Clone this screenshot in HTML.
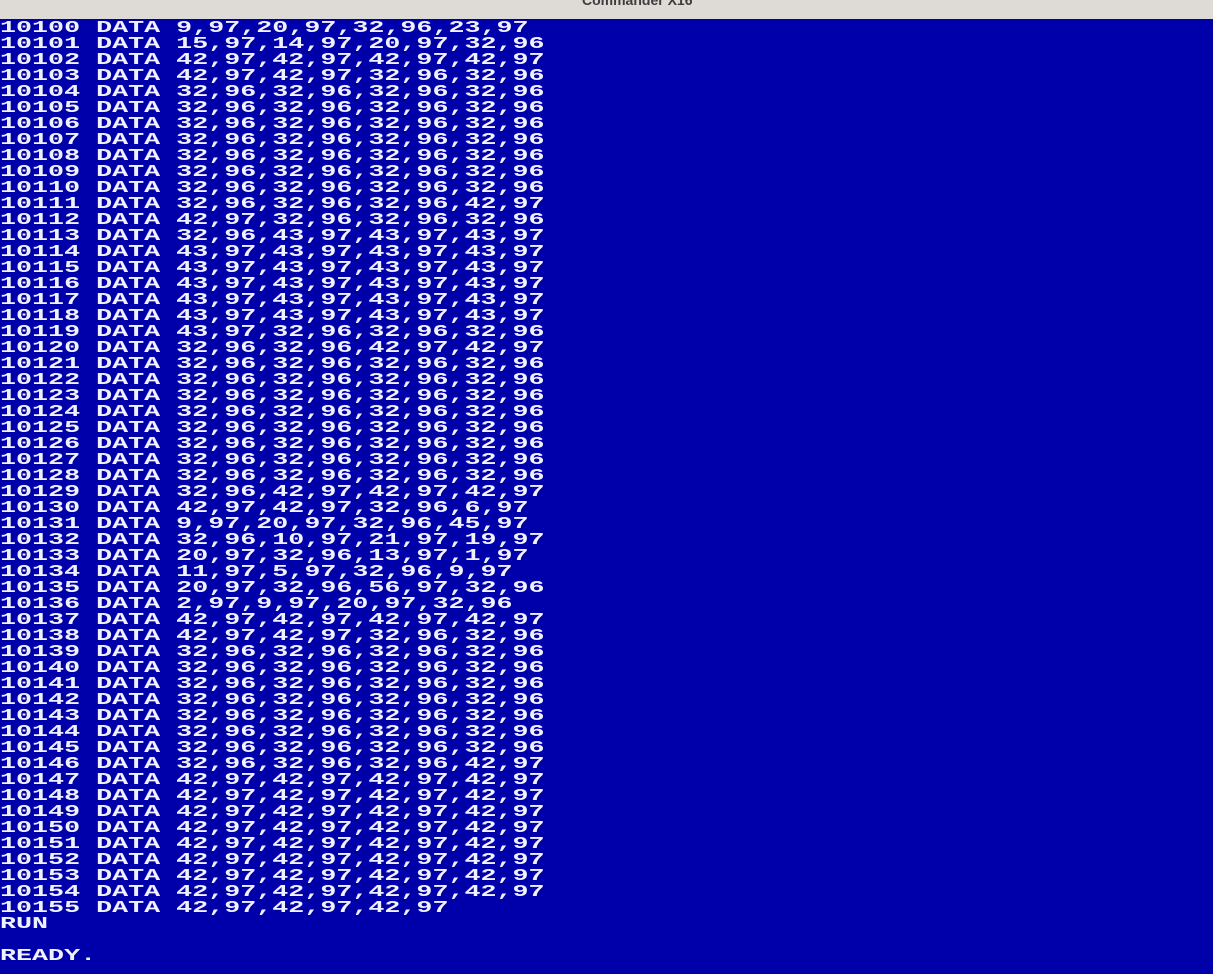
<!DOCTYPE html>
<html><head><meta charset="utf-8"><style>
html,body{margin:0;padding:0;width:1213px;height:974px;overflow:hidden;background:#0000aa}
#bar{position:absolute;left:0;top:0;width:1213px;height:19px;background:#dedbd6;overflow:hidden}
#bar span{position:absolute;left:582px;top:-8px;font:bold 14px "Liberation Sans",sans-serif;color:#3c3c3c;white-space:nowrap}
#scr{position:absolute;left:0;top:19px;width:1213px;height:955px;background:#0000aa}
.l{position:absolute;left:0;height:16px;line-height:16px;font:bold 17px "Liberation Mono",monospace;color:#f0f0ff;white-space:pre;transform-origin:0 0;transform:scaleX(1.57)}
</style></head><body>
<div id="bar"><span>Commander X16</span></div>
<div id="scr"></div>
<script>
var L=["9,97,20,97,32,96,23,97","15,97,14,97,20,97,32,96","42,97,42,97,42,97,42,97","42,97,42,97,32,96,32,96"];
var A="32,96,32,96,32,96,32,96",B="42,97,42,97,42,97,42,97",C="43,97,43,97,43,97,43,97";
for(var i=4;i<=10;i++)L.push(A);
L.push("32,96,32,96,32,96,42,97","42,97,32,96,32,96,32,96","32,96,43,97,43,97,43,97");
for(i=0;i<5;i++)L.push(C);
L.push("43,97,32,96,32,96,32,96","32,96,32,96,42,97,42,97");
for(i=0;i<8;i++)L.push(A);
L.push("32,96,42,97,42,97,42,97","42,97,42,97,32,96,6,97","9,97,20,97,32,96,45,97","32,96,10,97,21,97,19,97","20,97,32,96,13,97,1,97","11,97,5,97,32,96,9,97","20,97,32,96,56,97,32,96","2,97,9,97,20,97,32,96",B,"42,97,42,97,32,96,32,96");
for(i=0;i<7;i++)L.push(A);
L.push("32,96,32,96,32,96,42,97");
for(i=0;i<8;i++)L.push(B);
L.push("42,97,42,97,42,97");
var lines=L.map(function(s,k){return (10100+k)+" DATA "+s});
lines.push("RUN","","READY.");
var h="";
lines.forEach(function(s,k){h+='<div class="l" style="top:'+(k*16)+'px">'+s+'</div>'});
document.getElementById("scr").innerHTML=h;
</script>
</body></html>
